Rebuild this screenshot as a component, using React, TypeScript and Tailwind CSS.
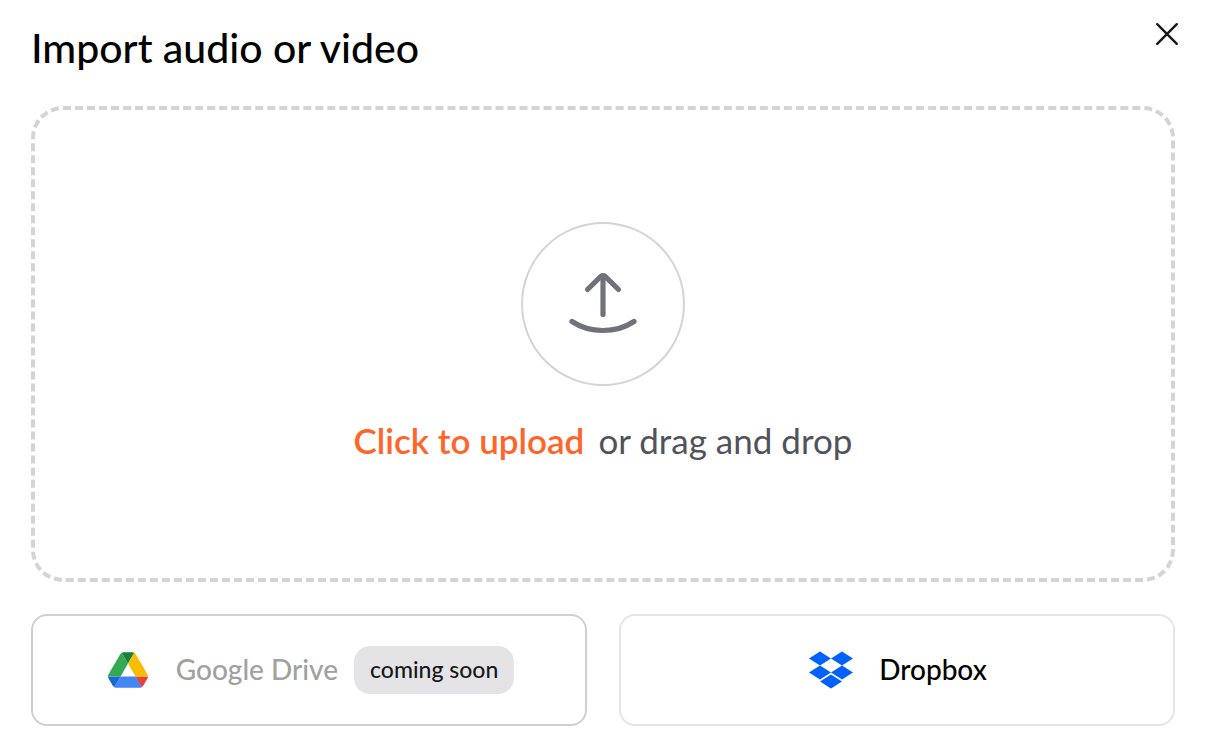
import type { ReactNode } from "react";

function CloseIcon() {
  return (
    <svg width="24" height="24" viewBox="0 0 24 24" fill="none" stroke="currentColor" strokeWidth="2.4" strokeLinecap="round" aria-hidden="true">
      <path d="M2.2 2.2 21.8 21.8" />
      <path d="M21.8 2.2 2.2 21.8" />
    </svg>
  );
}

function UploadIcon() {
  return (
    <svg width="80" height="80" viewBox="0 0 80 80" fill="none" stroke="currentColor" strokeWidth="5.2" strokeLinecap="round" strokeLinejoin="round" aria-hidden="true">
      <path d="M40 13.5V50.5" />
      <path d="M24.5 25.5 37.6 12.6Q40 10.8 42.4 12.6L55.5 25.5" />
      <path d="M9 57.5Q22.5 66.5 40 66.5T71 57.5" />
    </svg>
  );
}

function DriveLogo() {
  return (
    <svg width="40" height="36" viewBox="0 0 87.3 78" aria-hidden="true">
      <path d="m6.6 66.85 3.85 6.65c.8 1.4 1.95 2.5 3.3 3.3l13.75-23.8h-27.5c0 1.55.4 3.1 1.2 4.5z" fill="#1967d2" />
      <path d="m43.65 25-13.75-23.8c-1.35.8-2.5 1.9-3.3 3.3l-25.4 44a9.06 9.06 0 0 0 -1.2 4.5h27.5z" fill="#34a853" />
      <path d="m73.55 76.8c1.35-.8 2.5-1.9 3.3-3.3l1.6-2.75 7.65-13.25c.8-1.4 1.2-2.95 1.2-4.5h-27.502l5.852 11.5z" fill="#ea4335" />
      <path d="m43.65 25 13.75-23.8c-1.35-.8-2.9-1.2-4.5-1.2h-18.5c-1.6 0-3.15.45-4.5 1.2z" fill="#188038" />
      <path d="m59.8 53h-32.3l-13.75 23.8c1.35.8 2.9 1.2 4.5 1.2h50.8c1.6 0 3.15-.45 4.5-1.2z" fill="#4285f4" />
      <path d="m73.4 26.5-12.7-22c-.8-1.4-1.95-2.5-3.3-3.3l-13.75 23.8 16.15 28h27.45c0-1.55-.4-3.1-1.2-4.5z" fill="#fbbc04" />
    </svg>
  );
}

function DropboxLogo() {
  return (
    <svg width="44" height="38" viewBox="0 0 44 38" fill="#0061ff" aria-hidden="true">
      <path d="M11 .5 22 7.5 11 14.5 0 7.5Z" />
      <path d="M33 .5 44 7.5 33 14.5 22 7.5Z" />
      <path d="M11 14.5 22 21.5 11 28.5 0 21.5Z" />
      <path d="M33 14.5 44 21.5 33 28.5 22 21.5Z" />
      <path d="M22 23.6 33 30.6 22 37.6 11 30.6Z" />
    </svg>
  );
}

function SourceButton({
  icon,
  label,
  badge,
  disabled,
}: {
  icon: ReactNode;
  label: string;
  badge?: string;
  disabled?: boolean;
}) {
  return (
    <button
      type="button"
      disabled={disabled}
      className={
        "flex h-28 flex-1 items-center justify-center rounded-2xl border-2 text-[28px] font-medium " +
        (disabled ? "border-[#d0d0d0] text-[#a1a1a1]" : "border-[#e5e5e5] text-black")
      }
    >
      <span className="mr-6 flex w-12 justify-center">{icon}</span>
      <span className="pb-0.5">{label}</span>
      {badge && (
        <span className="ml-4 flex h-12 items-center rounded-2xl bg-[#e4e4e6] px-4 pb-0.5 text-[23px] text-[#18181b]">
          {badge}
        </span>
      )}
    </button>
  );
}

export default function App() {
  return (
    <main className="bg-white font-['Lato','Liberation_Sans',sans-serif]">
      <header className="flex items-start justify-between pt-3.5 pr-6 pb-[34px] pl-[31px]">
        <h1 className="mt-2.5 text-[41px] leading-[48px] font-medium text-black">Import audio or video</h1>
        <button type="button" aria-label="Close" className="flex size-10 items-center justify-center text-[#18181b]">
          <CloseIcon />
        </button>
      </header>

      <div className="flex flex-col gap-8 pr-9 pb-5 pl-[31px]">
        <label className="flex cursor-pointer flex-col items-center gap-8 rounded-[32px] border-4 border-dashed border-[#d4d4d8] pt-28 pb-[115px]">
          <input type="file" accept="audio/*,video/*" className="sr-only" />
          <span className="flex size-41 items-center justify-center rounded-full border-2 border-[#d4d4d8] text-[#71717a]">
            <UploadIcon />
          </span>
          <span className="flex gap-3.5 text-[35px] leading-[45px] text-[#52525b]">
            <span className="font-semibold text-[#ff6428]">Click to upload</span>
            <span>or drag and drop</span>
          </span>
        </label>

        <div className="flex gap-8">
          <SourceButton icon={<DriveLogo />} label="Google Drive" badge="coming soon" disabled />
          <SourceButton icon={<DropboxLogo />} label="Dropbox" />
        </div>
      </div>
    </main>
  );
}
